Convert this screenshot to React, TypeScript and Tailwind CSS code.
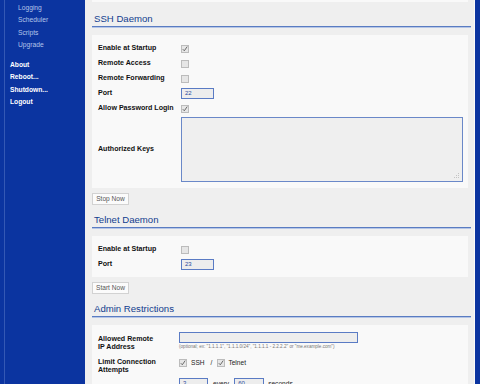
import React from "react"

function Check({ on }: { on?: boolean }) {
  return (
    <span className="flex h-[8px] w-[8px] items-center justify-center border border-[#bcbcbc] bg-[#e6e6e6]">
      {on && (
        <svg width="6" height="6" viewBox="0 0 6 6">
          <path d="M0.8 3.2 L2.3 4.8 L5.2 0.6" fill="none" stroke="#6a6a6a" strokeWidth="1" />
        </svg>
      )}
    </span>
  )
}

function Field({ value, w }: { value: string; w: string }) {
  return (
    <span className={`flex h-[11px] items-center border border-[#5a7bc4] bg-[#ededed] pl-[3px] text-[6px] text-[#2a4aa0] ${w}`}>
      {value}
    </span>
  )
}

function Row({ label, children }: { label: string; children?: React.ReactNode }) {
  return (
    <div className="flex h-[15px] items-center">
      <div className="w-[83px] text-[7.1px] font-bold text-[#111]">{label}</div>
      {children}
    </div>
  )
}

function Heading({ title }: { title: string }) {
  return (
    <div className="mr-[3px] mt-[9px]">
      <div className="flex h-[12px] items-center pl-[2px] text-[9.6px] text-[#123d8e]">{title}</div>
      <div className="mt-[1px] h-[1px] bg-[#5a7cc2]" />
      <div className="h-[1px] bg-[#b6c6e6]" />
    </div>
  )
}

function Button({ label }: { label: string }) {
  return (
    <div className="mt-[5px] flex h-[12px] w-[37px] items-center justify-center border border-[#d2d2d2] bg-[#fbfbfb] text-[6.6px] text-[#555]">
      {label}
    </div>
  )
}

const subMenu = ["Logging", "Scheduler", "Scripts", "Upgrade"]
const mainMenu = ["About", "Reboot...", "Shutdown...", "Logout"]

export default function App() {
  return (
    <div className="flex h-[384px] w-[480px] overflow-hidden bg-[#efefef] font-['Liberation_Sans',Arial,sans-serif]">
      <div className="w-[85px] shrink-0 bg-[#0b34a0] pl-[4px]">
        <div className="h-full border-l border-[#3458b4] pt-[2px]">
          {subMenu.map(item => (
            <div key={item} className="flex h-[12.3px] items-center pl-[13px] text-[6.7px] text-[#b4c4ea]">
              {item}
            </div>
          ))}
          <div className="mt-[7.7px]">
            {mainMenu.map(item => (
              <div key={item} className="flex h-[12.3px] items-center pl-[5px] text-[6.7px] font-bold text-white">
                {item}
              </div>
            ))}
          </div>
        </div>
      </div>

      <div className="flex-1 pl-[7px]">
        <div className="mr-[6px] h-[2px] bg-[#f9f9f9]" />
        <div className="h-[2px]" />

        <Heading title="SSH Daemon" />
        <div className="mr-[6px] mt-[7px] bg-[#f9f9f9] px-[6px] pb-[6px] pt-[6px]">
          <Row label="Enable at Startup"><Check on /></Row>
          <Row label="Remote Access"><Check /></Row>
          <Row label="Remote Forwarding"><Check /></Row>
          <Row label="Port"><Field value="22" w="w-[33px]" /></Row>
          <Row label="Allow Password Login"><Check on /></Row>
          <div className="mt-[1px] flex h-[65px] items-center">
            <div className="w-[83px] text-[7.1px] font-bold text-[#111]">Authorized Keys</div>
            <div className="relative mr-[-1px] h-[65px] flex-1 border border-[#6a88c8] bg-[#efefef]">
              <svg className="absolute bottom-[2px] right-[2px]" width="6" height="6" viewBox="0 0 6 6">
                <rect x="4" y="0" width="1" height="1" fill="#c4c4c4" />
                <rect x="4" y="2" width="1" height="1" fill="#c4c4c4" />
                <rect x="2" y="2" width="1" height="1" fill="#c4c4c4" />
                <rect x="4" y="4" width="1" height="1" fill="#c4c4c4" />
                <rect x="2" y="4" width="1" height="1" fill="#c4c4c4" />
                <rect x="0" y="4" width="1" height="1" fill="#c4c4c4" />
              </svg>
            </div>
          </div>
        </div>
        <Button label="Stop Now" />

        <Heading title="Telnet Daemon" />
        <div className="mr-[6px] mt-[7px] bg-[#f9f9f9] px-[6px] pb-[5px] pt-[6px]">
          <Row label="Enable at Startup"><Check /></Row>
          <Row label="Port"><Field value="23" w="w-[33px]" /></Row>
        </div>
        <Button label="Start Now" />

        <Heading title="Admin Restrictions" />
        <div className="mr-[6px] mt-[7px] bg-[#f9f9f9] px-[6px] pb-[6px] pt-[6px]">
          <div className="flex items-start">
            <div className="mt-[4px] w-[81px] text-[7.1px] font-bold leading-[8px] text-[#111]">
              Allowed Remote<br />IP Address
            </div>
            <div className="mt-[1px]">
              <span className="block h-[11px] w-[179px] border border-[#5a7bc4] bg-[#ededed]" />
              <div className="mt-[1px] whitespace-nowrap text-[4.6px] text-[#777]">
                (optional; ex: "1.1.1.1", "1.1.1.0/24", "1.1.1.1 - 2.2.2.2" or "me.example.com")
              </div>
            </div>
          </div>
          <div className="mt-[7px] flex items-start">
            <div className="w-[81px] text-[7.1px] font-bold leading-[8px] text-[#111]">
              Limit Connection<br />Attempts
            </div>
            <div className="flex items-center text-[6.6px] text-[#222]">
              <Check on />
              <span className="ml-[4px]">SSH</span>
              <span className="ml-[6px]">/</span>
              <span className="ml-[5px]"><Check on /></span>
              <span className="ml-[3px]">Telnet</span>
            </div>
          </div>
          <div className="mt-[4px] flex items-center pl-[81px] text-[6.6px] text-[#222]">
            <Field value="3" w="w-[29px]" />
            <span className="px-[5px]">every</span>
            <Field value="60" w="w-[30px]" />
            <span className="pl-[4px]">seconds</span>
          </div>
        </div>
      </div>

      <div className="w-[1px] shrink-0 bg-[#fafafa]" />
      <div className="w-[5px] shrink-0 bg-[#0b34a0]" />
    </div>
  )
}
